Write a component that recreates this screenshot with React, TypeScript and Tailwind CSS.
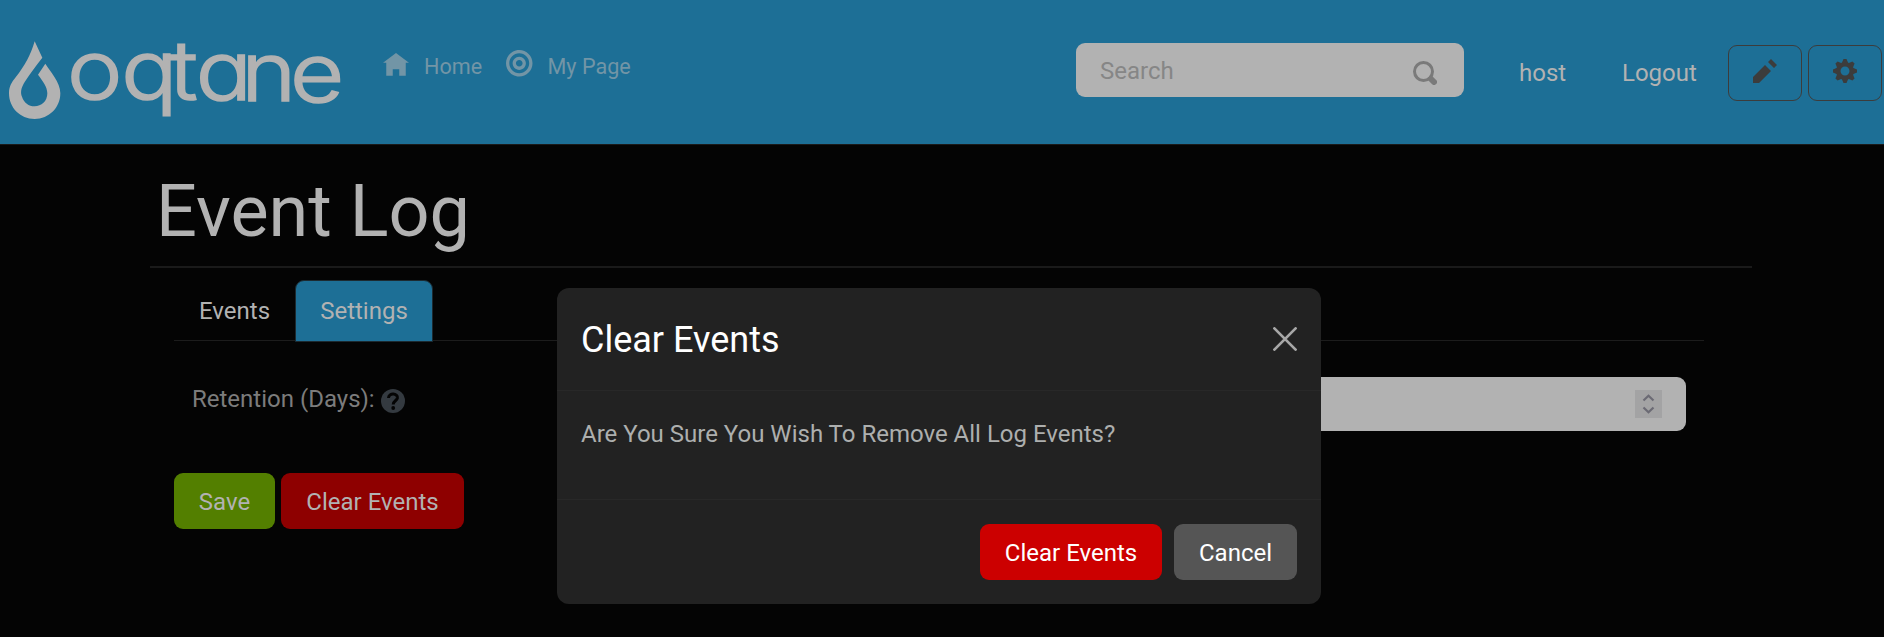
import type { ReactNode } from 'react';

const icons = {
  home: 'M4 0l-4 3h1v4h2v-2h2v2h2v-4.03l1 .03-4-3z',
  target:
    'M4 0c-2.2 0-4 1.8-4 4s1.8 4 4 4 4-1.8 4-4-1.8-4-4-4zm0 1c1.66 0 3 1.34 3 3s-1.34 3-3 3-3-1.34-3-3 1.34-3 3-3zm0 1c-1.1 0-2 .9-2 2s.9 2 2 2 2-.9 2-2-.9-2-2-2zm0 1c.56 0 1 .44 1 1s-.44 1-1 1-1-.44-1-1 .44-1 1-1z',
  pencil: 'M6 0l-1 1 2 2 1-1-2-2zm-2 2l-4 4v2h2l4-4-2-2z',
  cog: 'M3.5 0l-.5 1.19c-.1.03-.19.08-.28.13l-1.19-.5-.72.72.5 1.19c-.05.1-.09.18-.13.28l-1.19.5v1l1.19.5c.04.1.08.18.13.28l-.5 1.19.72.72 1.19-.5c.09.04.18.09.28.13l.5 1.19h1l.5-1.19c.09-.04.19-.08.28-.13l1.19.5.72-.72-.5-1.19c.04-.09.09-.19.13-.28l1.19-.5v-1l-1.19-.5c-.03-.09-.08-.19-.13-.28l.5-1.19-.72-.72-1.19.5c-.09-.04-.19-.09-.28-.13l-.5-1.19h-1zm.5 2.5c.83 0 1.5.67 1.5 1.5s-.67 1.5-1.5 1.5-1.5-.67-1.5-1.5.67-1.5 1.5-1.5z',
};

function Icon({ name, className }: { name: keyof typeof icons; className: string }) {
  return (
    <svg viewBox="0 0 8 8" fill="currentColor" className={className}>
      <path d={icons[name]} />
    </svg>
  );
}

function Logo() {
  return (
    <svg viewBox="0 0 1080 360" className="h-[120px] w-[360px] shrink-0 overflow-visible" fill="#b2b2b2">
      <path d="M104 64L127 113C108 138 90 160 76 183C62 205 61 218 66 230C72 248 86 259 104 259C124 259 142 244 142 220C142 200 128 183 114 164L136 131C150 155 181 185 181 220C181 263 147 297 104 297C60 297 27 263 27 220C27 200 34 188 47 172C75 137 92 105 104 64Z" />
      <text
        x="176 319 447 515 635 763"
        y="237 237 241 241 244 247"
        transform="scale(1.14 1)"
        fontSize="246"
        fontFamily="Inter, sans-serif"
        fontWeight="300"
        stroke="#b2b2b2"
        strokeWidth="5"
        className="[font-feature-settings:'cv11']"
      >
        oqtane
      </text>
    </svg>
  );
}

function Button({ className, children }: { className: string; children: ReactNode }) {
  return (
    <button className={`flex h-14 items-center justify-center rounded-[9px] ${className}`}>
      {children}
    </button>
  );
}

function Header() {
  return (
    <header className="flex h-[145px] items-start border-b border-[#1a1a1a] bg-[#1d6f96] pr-0.5">
      <div className="pt-5">
        <Logo />
      </div>
      <nav className="flex items-start pl-[23px] pt-[50px] text-[21.6px] text-[#7295a6]">
        <a className="flex">
          <Icon name="home" className="mt-[3px] size-[26px]" />
          <span className="ml-[15px] w-[60px] pt-px leading-8">Home</span>
        </a>
        <a className="ml-[22px] flex">
          <Icon name="target" className="size-[26.5px]" />
          <span className="ml-[15px] whitespace-nowrap pt-px leading-8">My Page</span>
        </a>
      </nav>
      <div className="ml-auto flex items-start">
        <div className="mt-[43px] flex h-[54px] w-[388px] items-center justify-between rounded-[9px] bg-[#b2b2b2] pl-6 pr-[27px] text-[#868686]">
          <span className="pt-px">Search</span>
          <svg viewBox="0 0 8 8" className="mt-[5px] size-6" fill="none" stroke="#7a7a7a">
            <circle cx="3.5" cy="3.5" r="3" />
            <path d="M6 6l1 1" strokeWidth="2" strokeLinecap="round" />
          </svg>
        </div>
        <a className="ml-[55px] mt-[57px] w-[103px] leading-8 text-[#b2b2b2]">host</a>
        <a className="mt-[57px] w-[106px] leading-8 text-[#b2b2b2]">Logout</a>
        <div className="mt-[45px] flex gap-1.5 text-[#3c3c3c]">
          <Button className="w-[74px] border border-[#3c3c3c] pb-1">
            <Icon name="pencil" className="size-6" />
          </Button>
          <Button className="w-[74px] border border-[#3c3c3c] pb-1">
            <Icon name="cog" className="size-6" />
          </Button>
        </div>
      </div>
    </header>
  );
}

function EventLog() {
  return (
    <main className="ml-[150px] w-[1602px]">
      <h1 className="h-[123px] border-b-2 border-[#1a1a1a] pl-[6px] pt-[25px] text-[72px] leading-[84px] text-[#b2b2b2]">
        Event Log
      </h1>
      <div className="pl-6 pr-12 pt-3">
        <div className="flex h-[61px] border-b border-[#1c1c1c] text-[#b2b2b2]">
          <a className="flex h-[61px] w-[121px] items-center justify-center">Events</a>
          <a className="flex h-[62px] w-[138px] items-center justify-center rounded-t-[9px] border border-[#1c2a31] bg-[#1d6f96]">
            Settings
          </a>
        </div>
        <div className="mt-9 flex h-[54px] items-center pl-[18px]">
          <label className="flex w-[382px] items-center text-[#7c7c7c]">
            <span className="w-[189px] whitespace-nowrap pb-2.5">Retention (Days):</span>
            <span className="-mt-1.5 flex size-6 items-center justify-center rounded-full bg-[#343a40] text-[#040404]">
              <svg viewBox="0 0 24 24" className="size-6" fill="none" stroke="currentColor" strokeWidth="3">
                <path d="M7.5 9C7.8 3.4 17 4 16.4 9C16 11.800 12.200 12 12.200 15.500" />
                <circle cx="12.200" cy="19" r="1.900" fill="currentColor" stroke="none" />
              </svg>
            </span>
          </label>
          <div className="mr-[18px] flex h-[54px] flex-1 items-center justify-end rounded-[9px] bg-[#b2b2b2] pr-[24px]">
            <svg viewBox="0 0 27 28" className="h-7 w-[27px] bg-[#a3a3a4]" fill="none" stroke="#6b6a74" strokeWidth="2.2">
              <path d="M8.500 10.500L13.500 5.800L18.500 10.500M8.500 17.500L13.500 22.200L18.500 17.500" />
            </svg>
          </div>
        </div>
        <div className="mt-[42px] flex gap-1.5 text-[#b2b2b2]">
          <Button className="w-[101px] bg-[#537f00] pt-0.5">Save</Button>
          <Button className="w-[183px] bg-[#8e0000] pt-0.5">Clear Events</Button>
        </div>
      </div>
    </main>
  );
}

function ClearEventsDialog() {
  return (
    <div
      role="dialog"
      className="absolute left-[557px] top-[288px] flex h-[316px] w-[764px] flex-col rounded-xl bg-[#222222]"
    >
      <div className="flex h-[103px] items-center justify-between border-b border-[#282828] px-6">
        <h2 className="pt-0.5 text-[36px] leading-[54px] text-white">Clear Events</h2>
        <svg viewBox="0 0 24 24" className="size-6" stroke="#a7a7a7" strokeWidth="2.7" strokeLinecap="round">
          <path d="M1.400 1.400L22.600 22.600M22.600 1.400L1.400 22.600" />
        </svg>
      </div>
      <p className="h-[108px] px-6 pt-[25px] leading-9 text-[#adafae]">
        Are You Sure You Wish To Remove All Log Events?
      </p>
      <div className="flex flex-1 justify-end gap-3 border-t border-[#282828] px-6 pt-6 text-white">
        <Button className="w-[182px] bg-[#cc0000] pt-0.5">Clear Events</Button>
        <Button className="w-[123px] bg-[#555555] pt-0.5">Cancel</Button>
      </div>
    </div>
  );
}

export default function App() {
  return (
    <div className="relative h-[637px] w-[1884px] overflow-hidden bg-[#040404] font-[Roboto,sans-serif] text-[24px]">
      <Header />
      <EventLog />
      <ClearEventsDialog />
    </div>
  );
}
